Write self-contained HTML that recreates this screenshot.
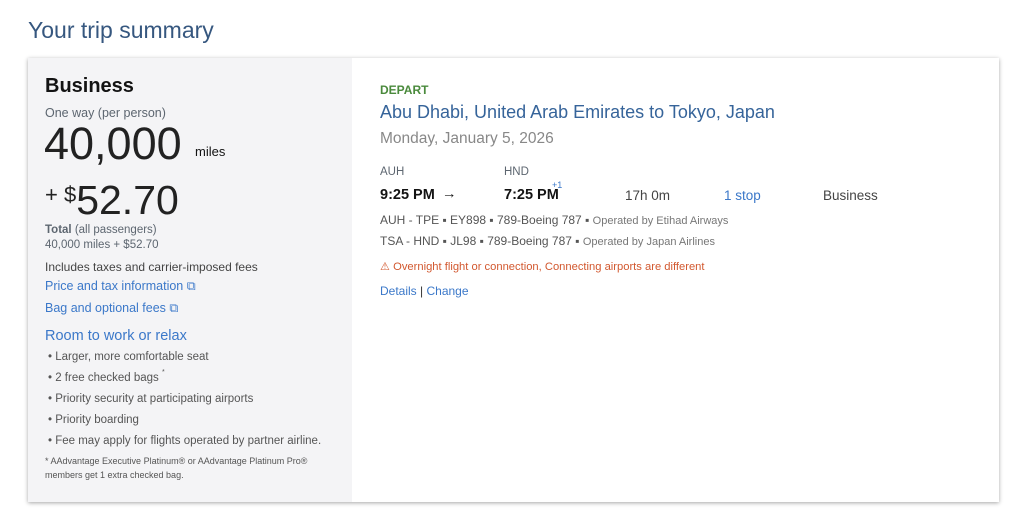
<!DOCTYPE html>
<html><head><style>
*{margin:0;padding:0;box-sizing:border-box}
body{width:1024px;height:522px;background:#fff;font-family:"Liberation Sans",sans-serif;position:relative;overflow:hidden;color:#36495a}
.a{position:absolute;white-space:nowrap}
h1{position:absolute;left:28px;top:17px;font-size:23px;font-weight:normal;color:#36577f}
.card{position:absolute;left:28px;top:58px;width:971px;height:444px;background:#fff;box-shadow:0 1px 4px rgba(0,0,0,.35)}
.left{position:absolute;left:0;top:0;width:324px;height:444px;background:#f4f4f6}
.blue{color:#3b78c9}
.g{color:#5d6670}
.k{color:#131313}
</style></head><body>
<h1>Your trip summary</h1>
<div class="card">
<div class="left">
<div class="a k" style="left:17px;top:17px;font-size:20px;font-weight:bold">Business</div>
<div class="a g" style="left:17px;top:48px;font-size:12.5px">One way (per person)</div>
<div class="a k" style="left:16px;top:60px;font-size:45px;color:#222">40,000</div>
<div class="a k" style="left:167px;top:86px;font-size:13px">miles</div>
<div class="a k" style="left:17px;top:119px;font-size:41px;color:#222"><span style="font-size:22px;vertical-align:12px">+ $</span>52.70</div>
<div class="a g" style="left:17px;top:166px;font-size:11.5px"><b>Total</b> (all passengers)</div>
<div class="a g" style="left:17px;top:181px;font-size:11.5px">40,000 miles + $52.70</div>
<div class="a" style="left:17px;top:202px;font-size:12px;color:#444">Includes taxes and carrier-imposed fees</div>
<div class="a blue" style="left:17px;top:221px;font-size:12.5px">Price and tax information &#x29C9;</div>
<div class="a blue" style="left:17px;top:243px;font-size:12.5px">Bag and optional fees &#x29C9;</div>
<div class="a blue" style="left:17px;top:270px;font-size:14.5px">Room to work or relax</div>
<div class="a" style="left:20px;top:289px;font-size:11.5px;color:#555;line-height:21px">
• Larger, more comfortable seat<br>• 2 free checked bags <span style="font-size:7px;vertical-align:top;line-height:10px">*</span><br>• Priority security at participating airports<br>• Priority boarding<br>• Fee may apply for flights operated by partner airline.</div>
<div class="a" style="left:17px;top:396px;font-size:9px;color:#555;line-height:14px">* AAdvantage Executive Platinum® or AAdvantage Platinum Pro®<br>members get 1 extra checked bag.</div>
</div>
<div class="a" style="left:352px;top:25px;font-size:12px;font-weight:bold;color:#4a8a3c">DEPART</div>
<div class="a" style="left:352px;top:44px;font-size:18px;color:#36649a">Abu Dhabi, United Arab Emirates to Tokyo, Japan</div>
<div class="a" style="left:352px;top:72px;font-size:15.5px;color:#888">Monday, January 5, 2026</div>
<div class="a g" style="left:352px;top:108px;font-size:11.5px">AUH</div>
<div class="a g" style="left:476px;top:108px;font-size:11.5px">HND</div>
<div class="a k" style="left:352px;top:129px;font-size:14.5px;font-weight:bold">9:25 PM</div>
<div class="a k" style="left:414px;top:128px;font-size:14.5px">→</div>
<div class="a k" style="left:476px;top:129px;font-size:14.5px;font-weight:bold">7:25 PM</div>
<div class="a blue" style="left:524px;top:122px;font-size:9px">+1</div>
<div class="a" style="left:597px;top:130px;font-size:13.5px;color:#444">17h 0m</div>
<div class="a blue" style="left:696px;top:130px;font-size:13.5px">1 stop</div>
<div class="a" style="left:795px;top:130px;font-size:13.5px;color:#444">Business</div>
<div class="a" style="left:352px;top:155px;font-size:12px;color:#555">AUH - TPE ▪ EY898 ▪ 789-Boeing 787 ▪ <span style="font-size:11px;color:#777">Operated by Etihad Airways</span></div>
<div class="a" style="left:352px;top:176px;font-size:12px;color:#555">TSA - HND ▪ JL98 ▪ 789-Boeing 787 ▪ <span style="font-size:11px;color:#777">Operated by Japan Airlines</span></div>
<div class="a" style="left:352px;top:202px;font-size:11.2px;color:#d2582f">⚠ Overnight flight or connection, Connecting airports are different</div>
<div class="a" style="left:352px;top:226px;font-size:12px;color:#3b78c9">Details <span style="color:#333">|</span> Change</div>
</div>
</body></html>
